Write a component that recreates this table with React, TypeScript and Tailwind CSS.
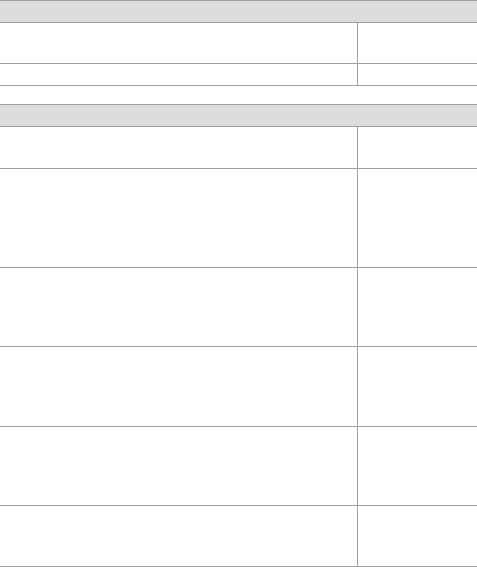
const line = "border-[#a0a0a0]";

function Row({ h }: { h: string }) {
  return (
    <div className={`flex ${h} border-b ${line}`}>
      <div className={`w-[358px] border-r ${line}`}></div>
      <div className="flex-1"></div>
    </div>
  );
}

function Header() {
  return <div className={`h-[22px] bg-[#dcdddc] border-b ${line}`}></div>;
}

export default function App() {
  return (
    <div className="w-[477px] h-[567px] bg-white overflow-hidden font-['Liberation_Sans',sans-serif]">
      <div className={`border-t ${line}`}>
        <Header />
        <Row h="h-[41px]" />
        <Row h="h-[22px]" />
      </div>

      <div className={`mt-[18px] border-t ${line}`}>
        <Header />
        <Row h="h-[42px]" />
        <Row h="h-[99px]" />
        <Row h="h-[79px]" />
        <Row h="h-[80px]" />
        <Row h="h-[79px]" />
        <Row h="h-[61px]" />
      </div>
    </div>
  );
}
